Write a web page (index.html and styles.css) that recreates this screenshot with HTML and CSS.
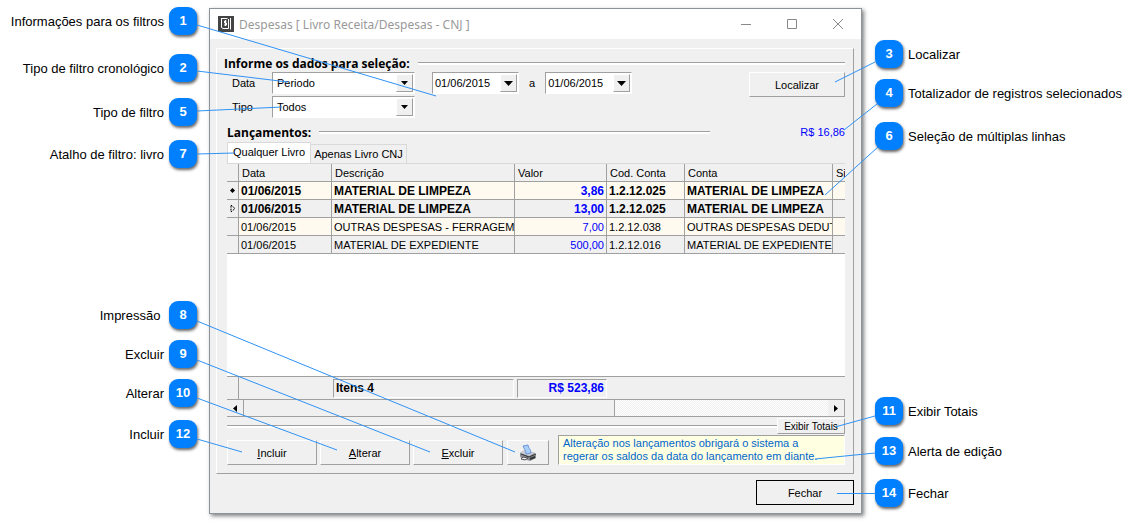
FILE: index.html
```html
<!DOCTYPE html>
<html lang="pt-BR">
<head>
    <meta charset="UTF-8">
    <title>Despesas</title>
    <link rel="stylesheet" href="styles.css">
</head>
<body>
    <ul class="callouts callouts-left">
        <li>Informações para os filtros <b>1</b></li>
        <li>Tipo de filtro cronológico <b>2</b></li>
        <li>Tipo de filtro <b>5</b></li>
        <li>Atalho de filtro: livro <b>7</b></li>
        <li>Impressão&nbsp; <b>8</b></li>
        <li>Excluir <b>9</b></li>
        <li>Alterar <b>10</b></li>
        <li>Incluir <b>12</b></li>
    </ul>

    <main class="window">
        <header class="titlebar">
            <svg class="app-icon" width="16" height="16" viewBox="0 0 16 16">
                <rect width="16" height="16" fill="#444"/>
                <path d="M4 2.500h5.500M12.500 2v11.500M3.500 2v9.500l1.500 1h5.500V3" fill="none" stroke="#fff"/>
                <path d="M8.500 5H6.500v2h2v2H6M7.500 4v6" fill="none" stroke="#fff"/>
            </svg>
            <h1>Despesas [ Livro Receita/Despesas - CNJ ]</h1>
            <button class="win-btn" aria-label="Minimizar"><svg width="12" height="12"><path d="M1 6.500h10"/></svg></button>
            <button class="win-btn" aria-label="Maximizar"><svg width="12" height="12"><path d="M1.500 1.500h9v9h-9z"/></svg></button>
            <button class="win-btn" aria-label="Fechar janela"><svg width="12" height="12"><path d="M1 1l10 10M11 1L1 11"/></svg></button>
        </header>

        <section class="panel">
            <h2 class="group-title">Informe os dados para seleção:</h2>
            <div class="filters">
                <div class="fields">
                    <label for="data">Data</label>
                    <div class="combo">
                        <select id="data"><option>Periodo</option></select>
                        <span class="drop"><svg width="7" height="4"><path d="M0 0h7L3.500 4z"/></svg></span>
                    </div>
                    <div class="dates">
                        <div class="combo date">
                            <input type="text" id="inicio" value="01/06/2015" aria-label="Data inicial">
                            <button class="drop" aria-label="Abrir calendário"><svg width="9" height="5"><path d="M0 0h9L4.500 5z"/></svg></button>
                        </div>
                        <label for="fim">a</label>
                        <div class="combo date">
                            <input type="text" id="fim" value="01/06/2015">
                            <button class="drop" aria-label="Abrir calendário"><svg width="9" height="5"><path d="M0 0h9L4.500 5z"/></svg></button>
                        </div>
                    </div>
                    <label for="tipo">Tipo</label>
                    <div class="combo">
                        <select id="tipo"><option>Todos</option></select>
                        <span class="drop"><svg width="7" height="4"><path d="M0 0h7L3.500 4z"/></svg></span>
                    </div>
                </div>
                <button class="btn localizar">Localizar</button>
            </div>

            <div class="entries">
                <div class="entries-head">
                    <h2 class="group-title">Lançamentos:</h2>
                    <output class="selected-total">R$ 16,86</output>
                </div>
                <div class="tabs">
                    <button class="tab active">Qualquer Livro</button>
                    <button class="tab">Apenas Livro CNJ</button>
                </div>
                <div class="grid">
                    <table>
                        <colgroup>
                            <col class="c-mark"><col class="c-data"><col class="c-desc"><col class="c-valor"><col class="c-cod"><col class="c-conta"><col>
                        </colgroup>
                        <thead>
                            <tr><th></th><th>Data</th><th>Descrição</th><th>Valor</th><th>Cod. Conta</th><th>Conta</th><th>Si</th></tr>
                        </thead>
                        <tbody>
                            <tr class="selected">
                                <td><svg width="5" height="5"><path d="M2.500 0L5 2.500 2.500 5 0 2.500z"/></svg></td>
                                <td>01/06/2015</td><td>MATERIAL DE LIMPEZA</td><td class="valor">3,86</td><td>1.2.12.025</td><td>MATERIAL DE LIMPEZA</td><td></td>
                            </tr>
                            <tr class="selected">
                                <td><svg width="6" height="9"><path d="M1 1l4 3.500L1 8z" fill="none" stroke="#000" stroke-dasharray="2 1"/></svg></td>
                                <td>01/06/2015</td><td>MATERIAL DE LIMPEZA</td><td class="valor">13,00</td><td>1.2.12.025</td><td>MATERIAL DE LIMPEZA</td><td></td>
                            </tr>
                            <tr>
                                <td></td>
                                <td>01/06/2015</td><td>OUTRAS DESPESAS - FERRAGEM</td><td class="valor">7,00</td><td>1.2.12.038</td><td>OUTRAS DESPESAS DEDUT</td><td></td>
                            </tr>
                            <tr>
                                <td></td>
                                <td>01/06/2015</td><td>MATERIAL DE EXPEDIENTE</td><td class="valor">500,00</td><td>1.2.12.016</td><td>MATERIAL DE EXPEDIENTE</td><td></td>
                            </tr>
                        </tbody>
                    </table>
                </div>
                <div class="totals">
                    <span class="totals-mark"></span>
                    <span class="total-cell items">Itens 4</span>
                    <span class="total-cell sum">R$ 523,86</span>
                </div>
                <div class="scrollbar">
                    <button class="scroll-btn" aria-label="Rolar para a esquerda"><svg width="4" height="7"><path d="M4 0v7L0 3.500z"/></svg></button>
                    <div class="thumb"></div>
                    <div class="track"></div>
                    <button class="scroll-btn" aria-label="Rolar para a direita"><svg width="4" height="7"><path d="M0 0v7l4-3.500z"/></svg></button>
                </div>
                <div class="show-totals">
                    <button class="btn">Exibir Totais</button>
                </div>
                <div class="actions">
                    <button class="btn"><u>I</u>ncluir</button>
                    <button class="btn"><u>A</u>lterar</button>
                    <button class="btn"><u>E</u>xcluir</button>
                    <button class="btn print" aria-label="Impressão">
                        <svg width="18" height="18" viewBox="0 0 18 18">
                            <path d="M1 9l5-3 10 3 1 2v3l-6 3-9-3-1-2z" fill="#8b8e96"/>
                            <path d="M1 9l5-3 10 3-6 3z" fill="#c9ccd4"/>
                            <path d="M4 2l5-1c0 3 3 4 3 8l-5 1C7 6 5 5 4 2z" fill="#a9d0fa" stroke="#6c94d8"/>
                            <path d="M2 10l8 3 7-3" fill="none" stroke="#333"/>
                            <path d="M4 13l5 1-3 2-4-1z" fill="#eee" stroke="#555"/>
                            <path d="M11 15l5-2" stroke="#333" stroke-width="2"/>
                        </svg>
                    </button>
                    <p class="alert">Alteração nos lançamentos obrigará o sistema a<br>regerar os saldos da data do lançamento em diante.</p>
                </div>
            </div>
        </section>

        <footer class="footer">
            <button class="btn fechar">Fechar</button>
        </footer>
    </main>

    <ul class="callouts callouts-right">
        <li><b>3</b> Localizar</li>
        <li><b>4</b> Totalizador de registros selecionados</li>
        <li><b>6</b> Seleção de múltiplas linhas</li>
        <li><b>11</b> Exibir Totais</li>
        <li><b>13</b> Alerta de edição</li>
        <li><b>14</b> Fechar</li>
    </ul>

    <!-- leader lines from each number to its control -->
    <svg class="leaders" viewBox="0 0 1138 523" preserveAspectRatio="none">
        <path d="M197 25L436 96M197 71L288 82M197 111L282 107M197 154L234 153"/>
        <path d="M197 321L515 452M197 360L430 452M197 398L337 450M197 439L242 452"/>
        <path d="M875 62L835 82M877 104L844 130M878 147L825 195"/>
        <path d="M875 416L835 427M875 453L815 459M875 493.500H837"/>
    </svg>
</body>
</html>
```

FILE: styles.css
```css
* {
    box-sizing: border-box;
}
body {
    position: relative;
    display: grid;
    grid-template-columns: 209px 1fr 276px;
    min-height: 100vh;
    margin: 0;
    background: #fff;
    color: #000;
    font: 11px "Liberation Sans", Arial, sans-serif;
}
button, input, select {
    font: inherit;
    color: inherit;
    margin: 0;
    padding: 0;
    border: 0;
    border-radius: 0;
}
h1, h2, p, ul {
    margin: 0;
    padding: 0;
}

/* callouts */
.callouts {
    display: grid;
    align-content: start;
    list-style: none;
    font-size: 13px;
}
.callouts-left {
    grid-template-rows: 47px 44px 42px 161px 39px 39px 41px 28px;
    padding: 7px 12px 0 0;
}
.callouts-right {
    grid-template-rows: 39px 43px 275px 40px 42px 28px;
    padding: 40px 0 0 13px;
}
.callouts li {
    display: flex;
    align-items: center;
    gap: 5px;
    height: 28px;
    white-space: nowrap;
}
.callouts-left li {
    justify-content: flex-end;
}
.callouts b {
    width: 28px;
    border-radius: 9px;
    background: #0080ff;
    box-shadow: 1px 2px 3px rgba(0, 0, 0, 0.6);
    color: #fff;
    font-size: 13px;
    line-height: 28px;
    text-align: center;
}
.leaders {
    position: absolute;
    inset: 0;
    width: 100%;
    height: 100%;
    pointer-events: none;
}
.leaders path {
    fill: none;
    stroke: #2f92f5;
    stroke-width: 1;
    vector-effect: non-scaling-stroke;
}

/* window */
.window {
    display: flex;
    flex-direction: column;
    margin: 8px 0 9px;
    border: 1px solid #8b949b;
    background: #f0f0f0;
    box-shadow: 2px 2px 4px rgba(0, 0, 0, 0.5);
}
.titlebar {
    display: flex;
    align-items: center;
    height: 30px;
    padding-left: 8px;
    background: #fff;
}
.titlebar h1 {
    flex: 1;
    padding-left: 5px;
    color: #999;
    font: 12px "Noto Sans", "Segoe UI", sans-serif;
}
.win-btn {
    display: grid;
    place-items: center;
    width: 46px;
    height: 28px;
    background: none;
}
.win-btn path {
    fill: none;
    stroke: #888;
}
.panel {
    display: flex;
    flex: 1;
    flex-direction: column;
    margin: 9px 7px 0 6px;
    padding: 7px 8px 8px 7px;
    border: 1px solid;
    border-color: #fff #a0a0a0 #a0a0a0 #fff;
}
.group-title {
    display: flex;
    flex: 1;
    align-items: center;
    gap: 8px;
    height: 14px;
    font: bold 12px "Open Sans", Tahoma, sans-serif;
    white-space: nowrap;
}
.group-title::after {
    content: "";
    flex: 1;
    height: 2px;
    border-top: 1px solid #a0a0a0;
    background: #fff;
}
.panel > .group-title {
    flex: none;
}

/* filters */
.filters {
    display: flex;
    justify-content: space-between;
    align-items: flex-start;
    margin-top: 2px;
}
.fields {
    display: grid;
    grid-template-columns: 40px 143px auto;
    grid-auto-rows: 22px;
    gap: 2px 0;
    align-items: center;
    padding-left: 8px;
}
.dates {
    display: flex;
    align-items: center;
    gap: 10px;
    padding-left: 17px;
}
.combo {
    display: flex;
    height: 22px;
    border: 1px solid;
    border-color: #a0a0a0 #fff #fff #a0a0a0;
    background: #fff;
}
.combo select, .combo input {
    flex: 1;
    min-width: 0;
    padding-left: 4px;
    appearance: none;
    background: none;
}
.combo.date {
    width: 87px;
}
.combo.date input {
    padding-left: 2px;
}
.drop {
    display: grid;
    place-items: center;
    width: 17px;
    margin: 1px;
    border: 1px solid;
    border-color: #fff #a0a0a0 #a0a0a0 #fff;
    background: #f0f0f0;
}
.btn {
    height: 25px;
    border: 1px solid;
    border-color: #fff #a0a0a0 #a0a0a0 #fff;
    background: #f0f0f0;
}
.localizar {
    width: 96px;
}

/* entries */
.entries {
    display: flex;
    flex: 1;
    flex-direction: column;
    min-width: 0;
    margin: 7px 0 0 3px;
}
.entries-head {
    display: flex;
    align-items: center;
    gap: 90px;
}
.selected-total {
    color: #00f;
}
.tabs {
    display: flex;
    align-items: flex-end;
    height: 21px;
    margin-top: 3px;
}
.tab {
    height: 19px;
    padding: 0 3px;
    border: 1px solid #d9d9d9;
    border-width: 1px 1px 0 0;
    background: #f0f0f0;
}
.tab.active {
    height: 21px;
    padding: 0 5px 2px;
    border-left-width: 1px;
    background: #fff;
}
.grid {
    flex: 1;
    overflow: hidden;
    border-top: 1px solid #d9d9d9;
    background: #fff;
}
table {
    width: 100%;
    table-layout: fixed;
    border-spacing: 0;
}
.c-mark {
    width: 12px;
}
.c-data {
    width: 93px;
}
.c-desc {
    width: 183px;
}
.c-valor {
    width: 92px;
}
.c-cod {
    width: 78px;
}
.c-conta {
    width: 148px;
}
th, td {
    height: 18px;
    padding: 0 2px;
    overflow: hidden;
    border: 1px solid #a0a0a0;
    border-width: 0 1px 1px 0;
    text-align: left;
    white-space: nowrap;
}
td {
    padding-right: 0;
}
th {
    padding-left: 3px;
    background: #f0f0f0;
    font-weight: normal;
}
th:last-child, td:last-child {
    border-right: 0;
}
td:first-child {
    padding: 0;
    background: #f0f0f0;
    line-height: 0;
    text-align: center;
}
tbody tr:nth-child(odd) {
    background: #fffaf0;
}
tbody tr:nth-child(even) {
    background: #f0f0f0;
}
.selected {
    font-size: 12px;
    font-weight: bold;
}
td.valor {
    padding-right: 2px;
    color: #00f;
    text-align: right;
}
.totals {
    display: flex;
    gap: 3px;
    height: 23px;
    border-top: 1px solid #a0a0a0;
    font-size: 12px;
    font-weight: bold;
}
.totals-mark {
    width: 12px;
    margin-right: 91px;
    border-right: 1px solid #a0a0a0;
}
.total-cell {
    height: 19px;
    margin-top: 2px;
    padding: 0 2px;
    border: 1px solid;
    border-color: #a0a0a0 #fff #fff #a0a0a0;
    line-height: 17px;
}
.items {
    width: 181px;
}
.sum {
    width: 90px;
    color: #00f;
    text-align: right;
}
.scrollbar {
    display: flex;
    height: 18px;
    border: 1px solid #a0a0a0;
    border-width: 1px 0;
}
.scroll-btn {
    display: grid;
    place-items: center;
    width: 17px;
    border-right: 1px solid #a0a0a0;
    background: #f0f0f0;
}
.thumb {
    flex: 371;
    border-right: 1px solid #a0a0a0;
}
.track {
    flex: 213;
    background: repeating-conic-gradient(#fff 0 25%, #f0f0f0 0 50%) 0 0 / 2px 2px;
}
.show-totals {
    display: flex;
    align-items: center;
    margin: 1px 0;
}
.show-totals::before {
    content: "";
    flex: 1;
    height: 2px;
    border-top: 1px solid #a0a0a0;
    background: #fff;
}
.show-totals .btn {
    width: 68px;
    height: 16px;
    font-size: 10px;
}
.actions {
    display: flex;
    align-items: flex-end;
    gap: 3px;
}
.actions .btn {
    width: 90px;
}
.actions .print {
    display: grid;
    place-items: center;
    width: 42px;
    margin-left: 1px;
}
.alert {
    flex: 1;
    margin-left: 6px;
    padding: 1px 4px;
    border: 1px solid;
    border-color: #a0a0a0 #fff #fff #a0a0a0;
    background: #ffffe1;
    color: #0066cc;
    line-height: 13px;
    white-space: nowrap;
}
.footer {
    padding: 6px 7px 8px;
    text-align: right;
}
.fechar {
    width: 98px;
    border-color: #000;
}
```
